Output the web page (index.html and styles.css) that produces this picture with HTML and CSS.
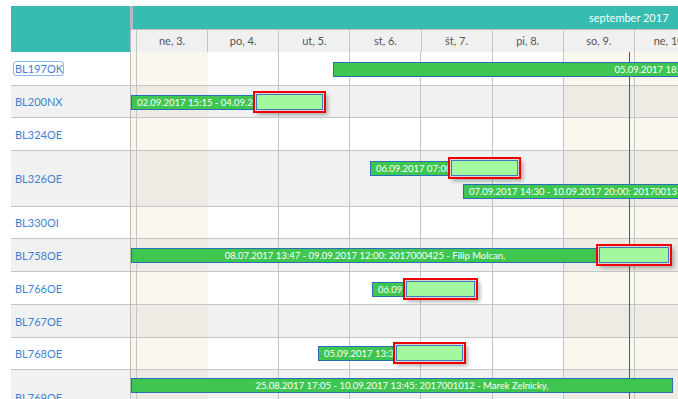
FILE: index.html
```html
<!DOCTYPE html>
<html lang="sk">
<head>
    <meta charset="UTF-8">
    <meta name="viewport" content="width=device-width, initial-scale=1.0">
    <title>Rezervácie vozidiel</title>
    <link rel="stylesheet" href="styles.css">
</head>
<body>

    <div class="scheduler">
        <div class="head">
            <div class="head-left"></div>
            <div class="head-right">
                <div class="month">september 2017</div>
                <div class="days">
                    <div class="day stub"></div>
                    <div class="day">ne, 3.</div>
                    <div class="day">po, 4.</div>
                    <div class="day">ut, 5.</div>
                    <div class="day">st, 6.</div>
                    <div class="day">št, 7.</div>
                    <div class="day">pi, 8.</div>
                    <div class="day">so, 9.</div>
                    <div class="day">ne, 10.</div>
                </div>
            </div>
        </div>

        <div class="body">
            <div class="now-line"></div>

            <div class="row first">
                <div class="label"><a class="focused">BL197OK</a></div>
                <div class="lane">
                    <div class="bar" style="left:202px; top:10px; width:840px">05.09.2017 18:15 - 11.09.2017 08:00: 2017001297 - Jozef Kollar,</div>
                </div>
            </div>

            <div class="row alt short">
                <div class="label"><a>BL200NX</a></div>
                <div class="lane">
                    <div class="bar" style="left:0; top:9px; width:125px">02.09.2017 15:15 - 04.09.2017 16:30: 2017001288 - Martin Hudec,</div>
                    <div class="pick" style="left:125px; top:8px; width:67px"></div>
                </div>
            </div>

            <div class="row">
                <div class="label"><a>BL324OE</a></div>
                <div class="lane"></div>
            </div>

            <div class="row alt tall">
                <div class="label"><a>BL326OE</a></div>
                <div class="lane">
                    <div class="bar" style="left:239px; top:10px; width:81px">06.09.2017 07:00 - 07.09.2017 12:00: 2017001301 - Peter Baran,</div>
                    <div class="pick" style="left:320px; top:9px; width:67px"></div>
                    <div class="bar" style="left:332px; top:33px; width:230px">07.09.2017 14:30 - 10.09.2017 20:00: 2017001312 - Tomas Kral,</div>
                </div>
            </div>

            <div class="row short">
                <div class="label"><a>BL330OI</a></div>
                <div class="lane"></div>
            </div>

            <div class="row alt">
                <div class="label"><a>BL758OE</a></div>
                <div class="lane">
                    <div class="bar" style="left:0; top:9px; width:468px">08.07.2017 13:47 - 09.09.2017 12:00: 2017000425 - Filip Molcan,</div>
                    <div class="pick" style="left:468px; top:8px; width:70px"></div>
                </div>
            </div>

            <div class="row">
                <div class="label"><a>BL766OE</a></div>
                <div class="lane">
                    <div class="bar" style="left:241px; top:10px; width:34px">06.09.2017 09:00 - 07.09.2017 10:00: 2017001305 - Jan Lukac,</div>
                    <div class="pick" style="left:275px; top:9px; width:69px"></div>
                </div>
            </div>

            <div class="row alt">
                <div class="label"><a>BL767OE</a></div>
                <div class="lane"></div>
            </div>

            <div class="row short">
                <div class="label"><a>BL768OE</a></div>
                <div class="lane">
                    <div class="bar" style="left:187px; top:8px; width:78px">05.09.2017 13:30 - 06.09.2017 14:00: 2017001299 - Juraj Simko,</div>
                    <div class="pick" style="left:265px; top:7px; width:67px"></div>
                </div>
            </div>

            <div class="row alt tall">
                <div class="label"><a>BL769OE</a></div>
                <div class="lane">
                    <div class="bar" style="left:0; top:8px; width:542px">25.08.2017 17:05 - 10.09.2017 13:45: 2017001012 - Marek Zelnicky,</div>
                </div>
            </div>
        </div>
    </div>

</body>
</html>
```

FILE: styles.css
```css
html, body {
    margin: 0;
    overflow: hidden;
    background-color: #fff;
    font-family: Lato, "Open Sans", sans-serif;
}
.scheduler {
    margin: 6px 0 0 11px;
    width: 696px;
}
.head {
    display: flex;
    height: 46px;
}
.head-left {
    width: 119px;
    flex: none;
    background-color: #36bcb0;
}
.head-right {
    flex: none;
    width: 576px;
    border-left: 1px solid #b9b9b9;
}
.month {
    height: 23px;
    line-height: 23px;
    border-left: 2px solid #b9b9b9;
    background-color: #36bcb0;
    color: #fff;
    font-size: 11px;
    text-align: left;
    padding-left: 456px;
}
.days {
    display: flex;
    height: 23px;
    background-color: #f0f0f0;
}
.day {
    flex: none;
    box-sizing: border-box;
    width: 71.125px;
    border-right: 1px solid #c4c4c4;
    border-top: 1px solid #c4c4c4;
    font-size: 11px;
    line-height: 22px;
    text-align: center;
    color: #555;
}
.day.stub {
    width: 6px;
}

.body {
    position: relative;
}
.now-line {
    position: absolute;
    left: 618px;
    top: 0;
    bottom: 0;
    width: 1px;
    background-color: #e61c1c;
    z-index: 1;
}
.row {
    display: flex;
    height: 33px;
}
.row.first {
    height: 34px;
}
.row.short {
    height: 32px;
}
.row.tall {
    height: 56px;
}
.label {
    flex: none;
    box-sizing: border-box;
    width: 120px;
    padding-left: 3px;
    border-right: 1px solid #b9b9b9;
    border-bottom: 1px solid #c4c4c4;
    display: flex;
    align-items: center;
    font-size: 11px;
}
.label a {
    color: #3f82cf;
    padding: 1px 0 0 1px;
    line-height: 12px;
}
.label a.focused {
    border-radius: 3px;
    box-shadow: 0 0 0 1px #8fb4ee;
}
.lane {
    flex: none;
    position: relative;
    overflow: hidden;
    width: 576px;
    box-sizing: border-box;
    border-bottom: 1px solid #c4c4c4;
    background-image:
        linear-gradient(to right, #faf7ef 0, #faf7ef 5px, #c4c4c4 5px, #c4c4c4 6px, #faf7ef 6px, #faf7ef 77.125px, transparent 77.125px),
        repeating-linear-gradient(to right, transparent 0, transparent 70.125px, #c4c4c4 70.125px, #c4c4c4 71.125px);
    background-position: 0 0, 6px 0;
    background-repeat: no-repeat, repeat-x;
}
.lane::after {
    content: "";
    position: absolute;
    left: 432.75px;
    top: 0;
    bottom: 0;
    width: 141.25px;
    background-image: linear-gradient(to right, #faf7ef 0, #faf7ef 70.125px, #c4c4c4 70.125px, #c4c4c4 71.125px, #faf7ef 71.125px);
}
.row.alt .label,
.row.alt .lane {
    background-color: #f1f1f1;
}
.row.alt .lane {
    background-image:
        linear-gradient(to right, #eeebe4 0, #eeebe4 5px, #c4c4c4 5px, #c4c4c4 6px, #eeebe4 6px, #eeebe4 77.125px, transparent 77.125px),
        repeating-linear-gradient(to right, transparent 0, transparent 70.125px, #c4c4c4 70.125px, #c4c4c4 71.125px);
}
.row.alt .lane::after {
    background-image: linear-gradient(to right, #eeebe4 0, #eeebe4 70.125px, #c4c4c4 70.125px, #c4c4c4 71.125px, #eeebe4 71.125px);
}

.bar {
    position: absolute;
    z-index: 2;
    box-sizing: border-box;
    height: 15px;
    padding: 0 5px;
    border: 1px solid #2c6db8;
    background-color: #3ec651;
    color: #fff;
    font-size: 9.5px;
    line-height: 13px;
    text-align: center;
    white-space: nowrap;
    overflow: hidden;
}
.pick {
    position: absolute;
    z-index: 3;
    box-sizing: border-box;
    height: 16px;
    border: 1px solid #3d79bd;
    background-color: #a3f79e;
    box-shadow: 0 0 0 1px #d8d8d8, 0 0 0 3px #f00000, 3px 3px 4px 2px rgba(0, 0, 0, 0.3);
}
```
